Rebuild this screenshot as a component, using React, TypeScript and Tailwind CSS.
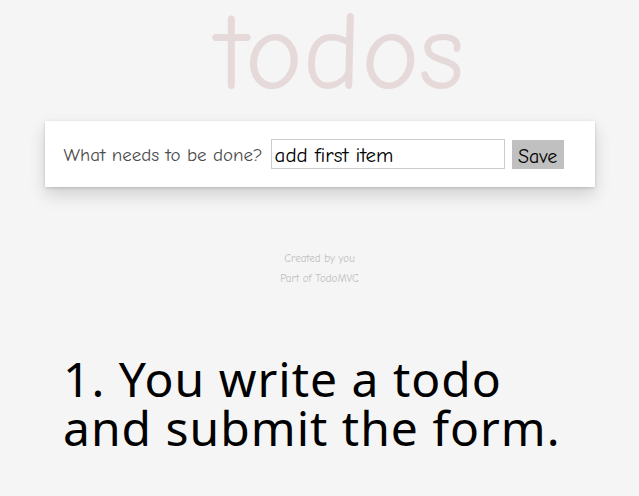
import { useState } from "react";

export default function App() {
  const [text, setText] = useState("add first item");

  return (
    <div className="min-h-[496px] w-full bg-[#f5f5f5] overflow-hidden font-[family-name:'Comic_Sans_MS','Comic_Neue',cursive]">
      <h1 className="h-[121px] pl-[42px] text-center text-[110px] leading-[105px] text-[#e6d9d9]">
        todos
      </h1>
      <div className="mx-auto w-[550px] h-[66px] bg-white shadow-[0_8px_16px_rgba(0,0,0,0.15),0_1px_3px_rgba(0,0,0,0.15)] flex items-center pl-[19px]">
        <form className="flex items-center" onSubmit={(e) => e.preventDefault()}>
          <label className="text-[19px] text-[#4d4d4d] mr-[8px] pt-[3px]">What needs to be done?</label>
          <input
            value={text}
            onChange={(e) => setText(e.target.value)}
            className="w-[234px] h-[30px] border border-[#cccccc] px-[3px] pt-[3px] text-[21px] text-black outline-none"
          />
          <button type="submit" className="ml-[7px] w-[52px] h-[29px] pt-[2px] bg-[#c0c0c0] text-[20px] text-black">
            Save
          </button>
        </form>
      </div>
      <footer className="mt-[62px] text-center text-[11px] leading-[20px] text-[#bfbfbf]">
        <p>Created by you</p>
        <p>Part of TodoMVC</p>
      </footer>
      <p className="mt-[65px] ml-[63px] text-[48px] leading-[49px] tracking-[1px] text-black font-[family-name:'Noto_Sans',sans-serif]">
        1. You write a todo
        <br />
        and submit the form.
      </p>
    </div>
  );
}
